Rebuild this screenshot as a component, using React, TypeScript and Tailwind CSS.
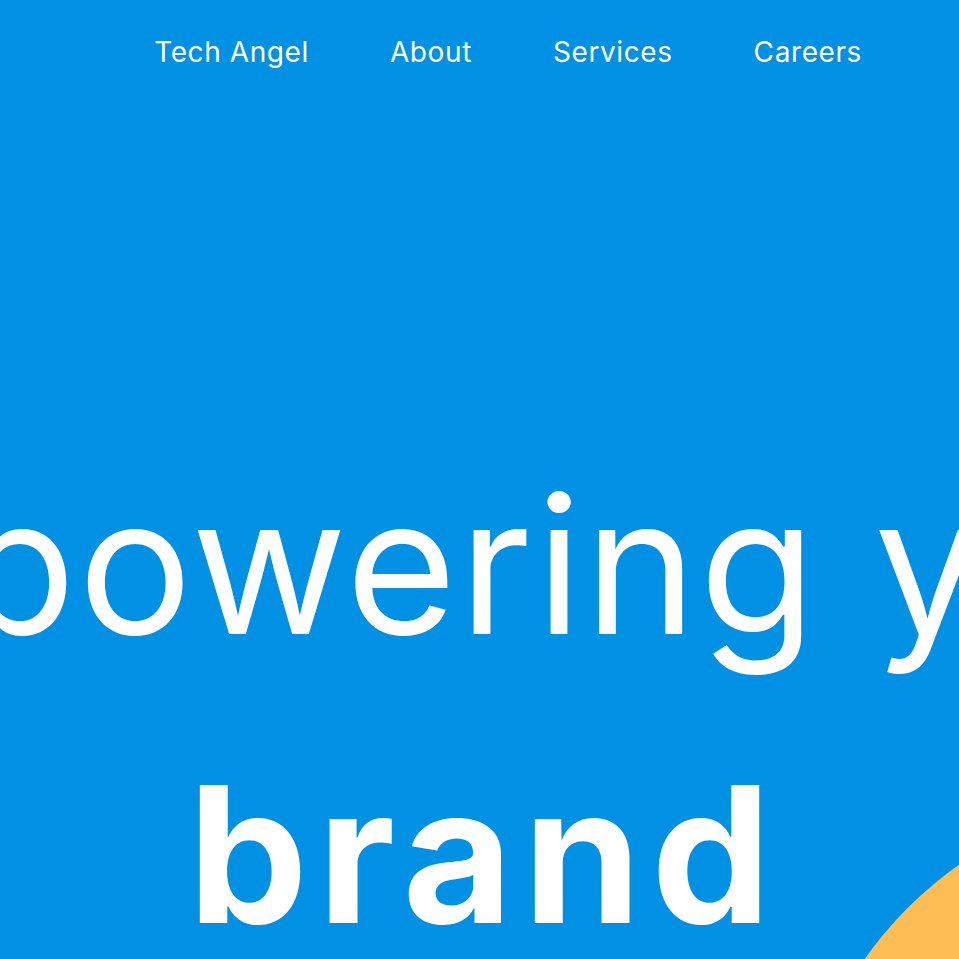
export default function App() {
  return (
    <div className="relative h-screen w-full overflow-hidden bg-[#0091e4] font-['Inter',sans-serif] text-white">
      <nav className="flex justify-end gap-[81px] pr-[97px] pt-[38px] text-[28px] leading-none tracking-[0.6px]">
        <a href="#">Tech Angel</a>
        <a href="#">About</a>
        <a href="#">Services</a>
        <a href="#">Careers</a>
      </nav>

      <div className="mt-[404px] flex flex-col items-center">
        <h1 className="whitespace-nowrap text-[190px] font-normal leading-none tracking-[2.5px]">
          Empowering your
        </h1>
        <h2 className="mt-[99px] whitespace-nowrap pl-[10px] text-[190px] font-bold leading-none tracking-[10px]">
          brand
        </h2>
      </div>

      <div className="absolute left-[795px] top-[795px] h-[770px] w-[770px] rounded-full bg-[#ffbe55]" />
    </div>
  )
}
